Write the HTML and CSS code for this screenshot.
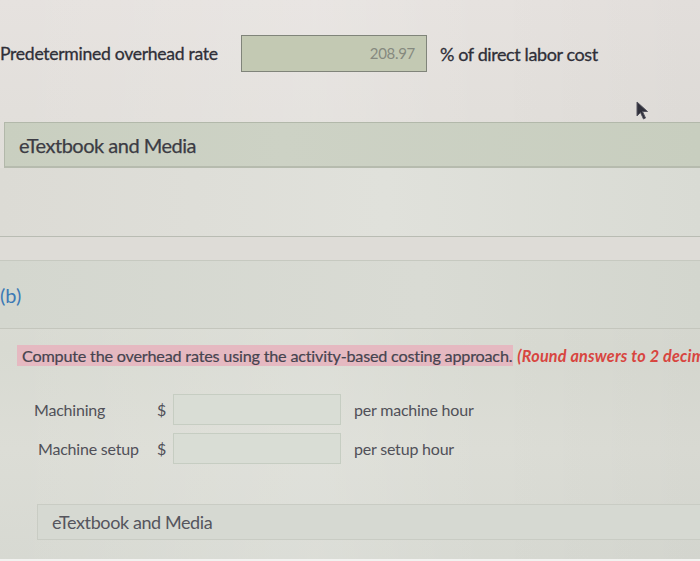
FILE: index.html
```html
<!DOCTYPE html>
<html lang="en">
<head>
<meta charset="utf-8">
<title>Overhead rates</title>
<link rel="stylesheet" href="styles.css">
</head>
<body>
<div class="page">
  <div class="rate-row">
    <span class="rate-label">Predetermined overhead rate</span>
    <span class="rate-input">208.97</span>
    <span class="rate-unit">% of direct labor cost</span>
  </div>
  <div class="ebar ebar-top">eTextbook and Media</div>
  <div class="spacer"></div>
  <div class="band"></div>
  <div class="part">
    <span class="part-label">(b)</span>
  </div>
  <div class="question">
    <p class="prompt"><span class="hl">Compute the overhead rates using the activity-based costing approach.</span> <em class="note">(Round answers to 2 decimal places, e.g. 12.25.)</em></p>
    <div class="grid">
      <span class="g-label">Machining</span>
      <span class="g-cur">$</span>
      <span class="g-input"></span>
      <span class="g-unit">per machine hour</span>
      <span class="g-label g-label2">Machine setup</span>
      <span class="g-cur">$</span>
      <span class="g-input"></span>
      <span class="g-unit">per setup hour</span>
    </div>
    <div class="ebar ebar-bottom">eTextbook and Media</div>
  </div>
  <div class="bottom-edge"></div>
  <svg class="cursor" width="16" height="20" viewBox="0 0 16 20" aria-hidden="true">
    <path d="M2 1 L2 15 L5.5 11.5 L8.5 18 L10.5 17 L7.5 10.5 L12.5 10.5 Z" fill="#2f2f3a" stroke="#55555f" stroke-width="1"/>
  </svg>
</div>
</body>
</html>
```

FILE: styles.css
```css
* { box-sizing: border-box; }
html, body { margin: 0; padding: 0; }
body {
  width: 700px;
  height: 561px;
  overflow: hidden;
  font-family: Lato, "Open Sans", sans-serif;
  background: #dcdcd6;
}
.page {
  position: relative;
  height: 561px;
  overflow: hidden;
  display: flex;
  flex-direction: column;
  background:
    linear-gradient(90deg, rgba(255,255,255,0) 0%, rgba(255,255,255,0.12) 45%, rgba(255,255,255,0) 70%, rgba(0,0,0,0.02) 100%),
    linear-gradient(180deg, #e6e2df 0%, #e2dfdb 20%, #dcdcd5 45%, #d8dad2 62%, #dcddd6 80%, #d7d9d2 100%);
}
.rate-row {
  display: flex;
  align-items: center;
  margin-top: 35px;
  height: 37px;
}
.rate-label {
  width: 241px;
  font-size: 17.6px;
  color: #2f2f38;
  letter-spacing: -0.3px;
  -webkit-text-stroke: 0.3px #2f2f38;
}
.rate-input {
  width: 186px;
  height: 37px;
  border: 1px solid #80847a;
  background: #c3c9b3;
  color: #86897f;
  font-size: 15px;
  text-align: right;
  padding-right: 11px;
  line-height: 35px;
  letter-spacing: -0.3px;
}
.rate-unit {
  margin-left: 13px;
  font-size: 18px;
  color: #2f2f38;
  letter-spacing: -0.4px;
  -webkit-text-stroke: 0.3px #2f2f38;
}
.ebar {
  display: flex;
  align-items: center;
  color: #3c3c44;
}
.ebar-top {
  margin-top: 50px;
  margin-left: 4px;
  height: 46px;
  padding-left: 14px;
  font-size: 20px;
  letter-spacing: -0.5px;
  -webkit-text-stroke: 0.25px #3c3c44;
  background: linear-gradient(90deg, #c9cfc0 0%, #cdd2c5 40%, #c8cebf 100%);
  border: 1px solid #b2b8aa;
  border-right: none;
  border-bottom: 2px solid #b6bbae;
}
.spacer {
  height: 69px;
  border-bottom: 1px solid #b9bcb3;
  background: linear-gradient(90deg, #dcdbd5 0%, #e0e1db 55%, #d9dbd4 100%);
}
.band {
  height: 24px;
  border-bottom: 1px solid #c6c9c0;
  background: #dedcd7;
}
.part {
  height: 68px;
  display: flex;
  align-items: center;
  border-bottom: 1px solid #c4c6bd;
  background: linear-gradient(90deg, #d4d7cf 0%, #d9dbd4 60%, #d3d6ce 100%);
}
.part-label {
  margin-left: 0;
  font-size: 20px;
  color: #3d7ab5;
}
.question {
  display: flex;
  flex-direction: column;
  padding-left: 17px;
}
.prompt {
  margin: 16px 0 0;
  height: 21px;
  font-size: 16.2px;
  line-height: 21px;
  white-space: nowrap;
  color: #46444f;
  letter-spacing: -0.2px;
  -webkit-text-stroke: 0.2px #46444f;
}
.hl {
  background: #e5b9c1;
  padding: 0 1px 0 5px;
  display: inline-block;
}
.note {
  color: #d8453f;
  font-weight: bold;
  font-style: italic;
  letter-spacing: 0.2px;
  -webkit-text-stroke: 0;
}
.grid {
  margin-top: 28px;
  display: grid;
  grid-template-columns: 140px 16px 168px auto;
  grid-auto-rows: 31px;
  row-gap: 8px;
  align-items: center;
  font-size: 16px;
  color: #505058;
  letter-spacing: -0.2px;
}
.g-label { padding-left: 17px; }
.g-label2 { padding-left: 21px; }
.g-cur { color: #505058; }
.g-input {
  height: 31px;
  border: 1px solid #c6cdc2;
  background: #d9ddd5;
}
.g-unit { padding-left: 13px; }
.ebar-bottom {
  margin-top: 40px;
  margin-left: 20px;
  height: 36px;
  padding-left: 14px;
  font-size: 18px;
  letter-spacing: -0.4px;
  color: #55555d;
  background: #d6d9d2;
  border: 1px solid #c9ccc4;
  border-right: none;
}
.bottom-edge {
  margin-top: auto;
  height: 2px;
  background: #f2f2f0;
}
.cursor {
  position: absolute;
  left: 635px;
  top: 101px;
}
```
